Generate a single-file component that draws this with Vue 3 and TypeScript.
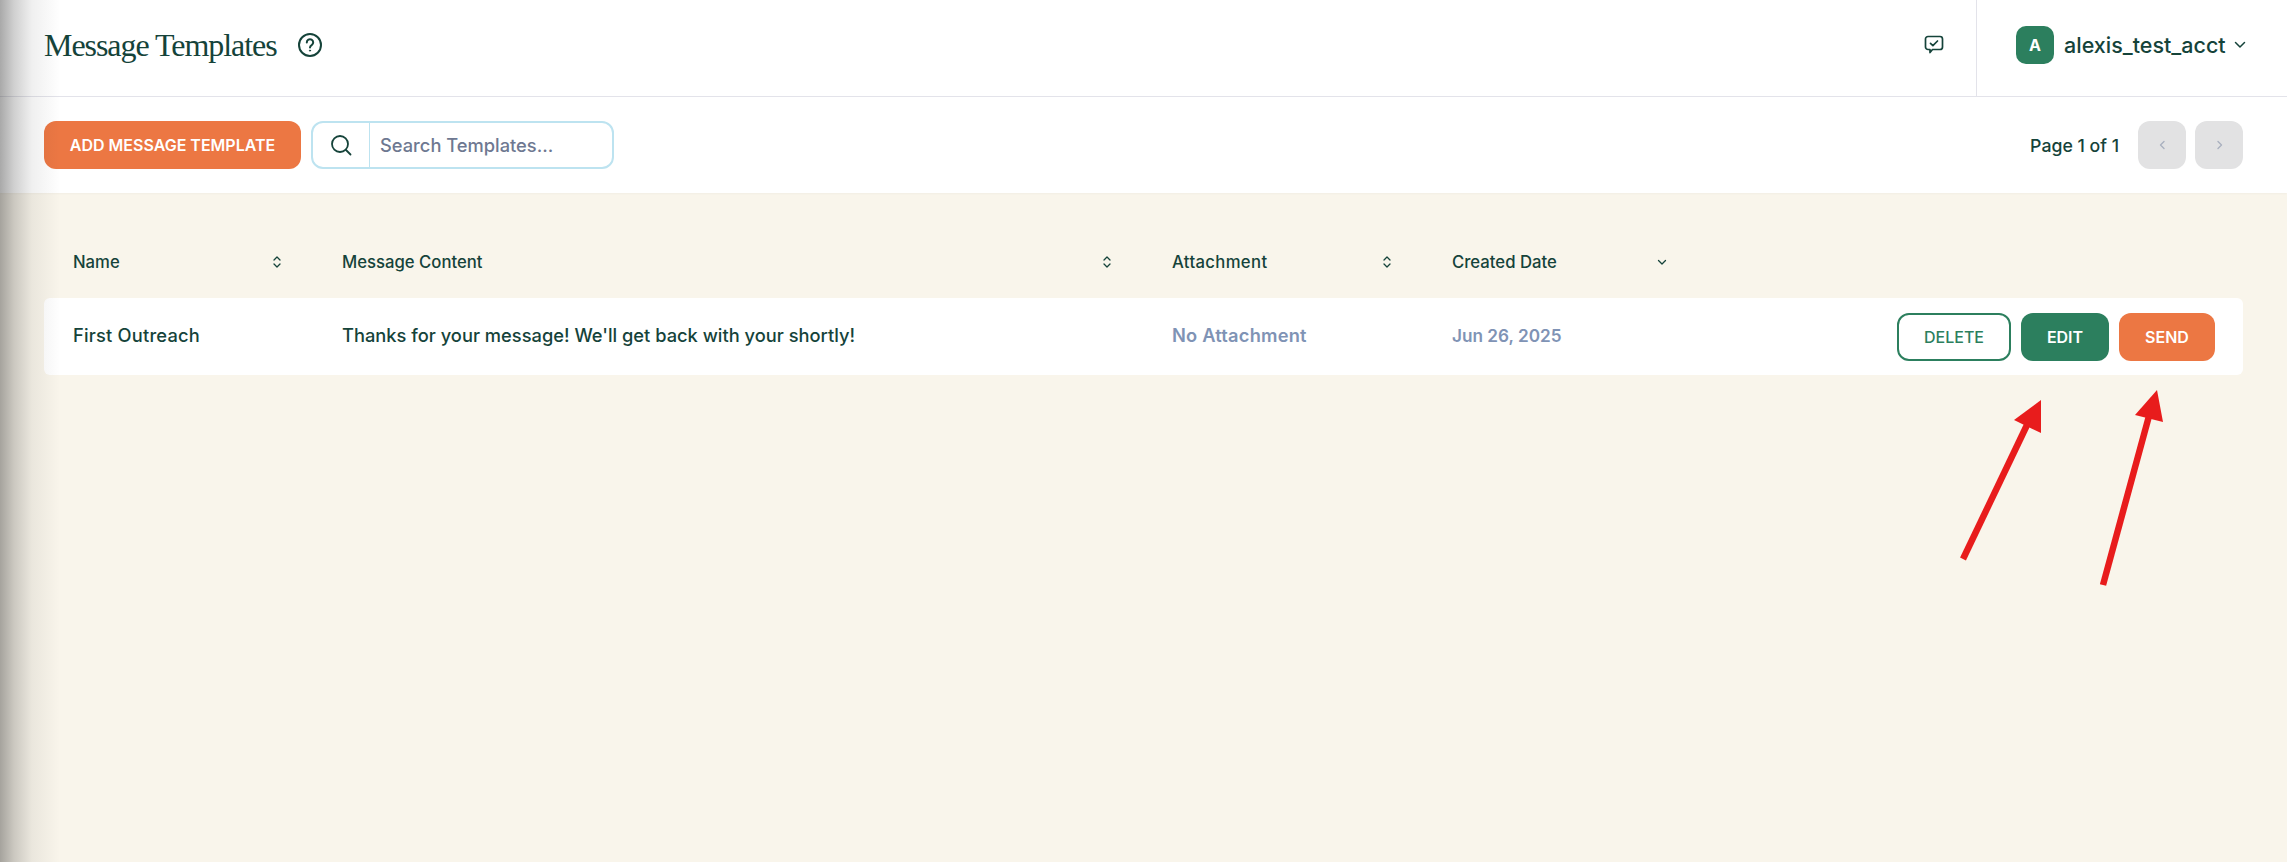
<script setup lang="ts">
interface Col { label: string; sort: 'both' | 'down' | 'none' }
const cols: Col[] = [
  { label: 'Name', sort: 'both' },
  { label: 'Message Content', sort: 'both' },
  { label: 'Attachment', sort: 'both' },
  { label: 'Created Date', sort: 'down' },
]
</script>

<template>
  <div class="page">
    <header class="topbar">
      <div class="title-wrap">
        <h1 class="title">Message Templates</h1>
        <svg class="help" width="24" height="24" viewBox="0 0 24 24" fill="none" stroke="#15433a" stroke-width="2" stroke-linecap="round">
          <circle cx="12" cy="12" r="11" />
          <path d="M8.8 9.4a3.2 3.2 0 1 1 4.9 2.7c-1.1.7-1.7 1.2-1.7 2.4" />
          <circle cx="12" cy="17.6" r=".6" fill="#15433a" stroke-width="1" />
        </svg>
      </div>
      <div class="top-right">
        <div class="feedback">
          <svg width="20" height="20" viewBox="0 0 20 20" fill="none" stroke="#15433a" stroke-width="1.7" stroke-linecap="round" stroke-linejoin="round">
            <path d="M4 1.500h12a2.500 2.500 0 0 1 2.500 2.500v8a2.500 2.500 0 0 1-2.500 2.500h-7.500l-2.500 3v-3h-2a2.500 2.500 0 0 1-2.500-2.500v-8a2.500 2.500 0 0 1 2.500-2.500z" />
            <path d="M6.500 8.300l2.400 2.300 4.600-4.600" />
          </svg>
        </div>
        <div class="account">
          <span class="avatar">A</span>
          <span class="acct-name">alexis_test_acct</span>
          <svg width="12" height="8" viewBox="0 0 12 8" fill="none" stroke="#15433a" stroke-width="1.500" stroke-linecap="round" stroke-linejoin="round">
            <path d="M1.500 1.500l4.500 4.500 4.500-4.500" />
          </svg>
        </div>
      </div>
    </header>

    <section class="toolbar">
      <div class="tools-left">
        <button class="btn add">ADD MESSAGE TEMPLATE</button>
        <div class="search">
          <span class="search-icon">
            <svg width="22" height="22" viewBox="0 0 22 22" fill="none" stroke="#15433a" stroke-width="1.800" stroke-linecap="round">
              <circle cx="10" cy="10" r="8" />
              <path d="M16 16l4.500 4.500" />
            </svg>
          </span>
          <span class="placeholder">Search Templates...</span>
        </div>
      </div>
      <div class="pager">
        <span class="page-label">Page 1 of 1</span>
        <span class="page-btn">
          <svg width="7" height="10" viewBox="0 0 7 10" fill="none" stroke="#a9b0bf" stroke-width="1.400" stroke-linecap="round" stroke-linejoin="round"><path d="M5 1.500l-3.500 3.500 3.500 3.500" /></svg>
        </span>
        <span class="page-btn">
          <svg width="7" height="10" viewBox="0 0 7 10" fill="none" stroke="#a9b0bf" stroke-width="1.400" stroke-linecap="round" stroke-linejoin="round"><path d="M2 1.500l3.500 3.500-3.500 3.500" /></svg>
        </span>
      </div>
    </section>

    <main class="content">
      <div class="table-head">
        <div v-for="c in cols" :key="c.label" class="th">
          <span>{{ c.label }}</span>
          <svg v-if="c.sort === 'both'" width="10" height="16" viewBox="0 0 10 16" fill="none" stroke="#15433a" stroke-width="1.300" stroke-linecap="round" stroke-linejoin="round">
            <path d="M2 6l3-3 3 3M2 10l3 3 3-3" />
          </svg>
          <svg v-else width="10" height="16" viewBox="0 0 10 16" fill="none" stroke="#15433a" stroke-width="1.300" stroke-linecap="round" stroke-linejoin="round">
            <path d="M1.500 6.500l3.500 3.500 3.500-3.500" />
          </svg>
        </div>
      </div>
      <div class="row">
        <div class="td wide">First Outreach</div>
        <div class="td">Thanks for your message! We'll get back with your shortly!</div>
        <div class="td muted wide">No Attachment</div>
        <div class="td muted date">Jun 26, 2025</div>
        <div class="actions">
          <button class="btn del">DELETE</button>
          <button class="btn edit">EDIT</button>
          <button class="btn send">SEND</button>
        </div>
      </div>
    </main>

    <div class="edge-shadow"></div>
    <svg class="arrows" width="2287" height="862" viewBox="0 0 2287 862">
      <path d="M1963 559L2027 425" stroke="#e81c1c" stroke-width="6.500" />
      <polygon points="2041,400 2014,420 2041,433" fill="#e81c1c" />
      <path d="M2103 585L2149 416" stroke="#e81c1c" stroke-width="6.500" />
      <polygon points="2157,390 2135,415 2163,422" fill="#e81c1c" />
    </svg>
  </div>
</template>

<style>
html, body { margin: 0; background: #f9f5eb; }
</style>

<style scoped>
.page {
  position: relative;
  width: 2287px;
  height: 862px;
  overflow: hidden;
  display: flex;
  flex-direction: column;
  background: #f9f5eb;
  font-family: Inter, "Liberation Sans", sans-serif;
  color: #15433a;
}
.topbar {
  height: 96px;
  display: flex;
  justify-content: space-between;
  background: #fff;
  border-bottom: 1px solid #e3e3ea;
}
.title-wrap {
  display: flex;
  align-items: center;
  gap: 21px;
  padding-left: 44px;
  padding-bottom: 6px;
}
.title {
  margin: 0;
  font-family: "Liberation Serif", serif;
  font-weight: 400;
  font-size: 32px;
  letter-spacing: -1.05px;
  color: #15433a;
}
.top-right { display: flex; align-items: stretch; }
.feedback {
  width: 92px;
  box-sizing: border-box;
  padding: 0 0 6px 8px;
  display: flex;
  align-items: center;
  justify-content: center;
}
.account {
  display: flex;
  align-items: center;
  width: 311px;
  box-sizing: border-box;
  padding: 0 0 6px 39px;
  border-left: 1px solid #e3e3ea;
}
.avatar {
  width: 38px;
  height: 38px;
  border-radius: 10px;
  background: #2c7f5e;
  color: #fff;
  font-weight: 700;
  font-size: 16px;
  display: flex;
  align-items: center;
  justify-content: center;
  margin-right: 10px;
}
.acct-name {
  font-size: 21.500px;
  font-weight: 500;
  margin-right: 8px;
}
.toolbar {
  height: 96px;
  display: flex;
  align-items: center;
  justify-content: space-between;
  background: #fff;
  padding: 0 44px;
  box-shadow: 0 1px 2px rgba(0, 0, 0, 0.03);
}
.tools-left { display: flex; align-items: center; gap: 10px; }
.btn {
  height: 48px;
  border: none;
  border-radius: 12px;
  font-family: inherit;
  font-size: 16px;
  font-weight: 600;
  color: #fff;
  padding: 0;
  box-sizing: border-box;
}
.add { width: 257px; background: #ec7743; }
.search {
  width: 303px;
  height: 48px;
  box-sizing: border-box;
  border: 2px solid #bde3f0;
  border-radius: 12px;
  display: flex;
  align-items: center;
}
.search-icon {
  width: 57px;
  height: 100%;
  border-right: 1px solid #bde3f0;
  display: flex;
  align-items: center;
  justify-content: center;
  box-sizing: border-box;
}
.placeholder {
  padding-left: 10px;
  font-size: 18.300px;
  font-weight: 500;
  color: #6e7891;
}
.pager { display: flex; align-items: center; gap: 9px; }
.page-label { font-size: 17.700px; font-weight: 500; margin-right: 10px; }
.page-btn {
  width: 48px;
  height: 48px;
  border-radius: 12px;
  background: #e2e2e3;
  display: flex;
  align-items: center;
  justify-content: center;
}
.content { padding: 34px 44px 0; flex: 1; }
.table-head,
.row {
  display: grid;
  grid-template-columns: 269px 830px 280px 275px 1fr;
  padding-left: 29px;
}
.table-head { height: 71px; }
.th {
  display: flex;
  justify-content: space-between;
  align-items: center;
  height: 70px;
  padding-right: 60px;
  font-size: 16.700px;
  font-weight: 500;
}
.th:nth-child(3) span { letter-spacing: 0.35px; }
.row {
  height: 77px;
  align-items: center;
  background: #fff;
  border-radius: 6px;
}
.td { font-size: 18.300px; font-weight: 500; padding-bottom: 3px; }
.wide { letter-spacing: 0.2px; }
.muted { color: #7f93b5; font-weight: 600; }
.date { font-size: 17.200px; }
.actions {
  display: flex;
  justify-content: flex-end;
  gap: 10px;
  padding-right: 28px;
}
.del {
  width: 114px;
  background: #fff;
  border: 2px solid #2c7f5e;
  color: #2c7f5e;
  font-weight: 500;
}
.edit { width: 88px; background: #2c7f5e; }
.send { width: 96px; background: #ec7743; }
.edge-shadow {
  position: absolute;
  left: 0;
  top: 0;
  bottom: 0;
  width: 60px;
  pointer-events: none;
  background: linear-gradient(to right, rgba(40, 40, 40, 0.4), rgba(40, 40, 40, 0.22) 14px, rgba(40, 40, 40, 0.07) 32px, rgba(40, 40, 40, 0));
}
.arrows { position: absolute; left: 0; top: 0; pointer-events: none; }
</style>
